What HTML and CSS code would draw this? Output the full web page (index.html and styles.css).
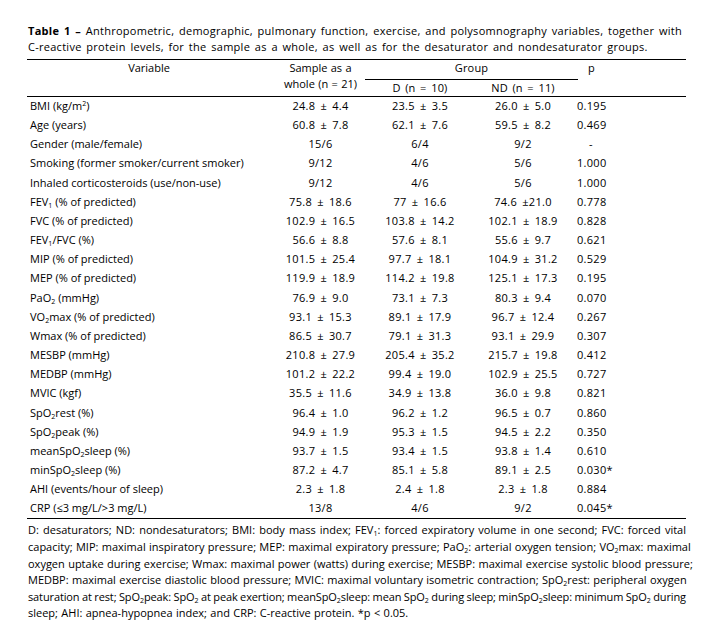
FILE: index.html
```html
<!DOCTYPE html>
<html lang="en">
<head>
<meta charset="utf-8">
<title>Table 1</title>
<link rel="stylesheet" href="styles.css">
</head>
<body>
<div class="page">
  <p class="caption"><b>Table 1 –</b> Anthropometric, demographic, pulmonary function, exercise, and polysomnography variables, together with<br>C-reactive protein levels, for the sample as a whole, as well as for the desaturator and nondesaturator groups.</p>
  <table class="data">
    <colgroup>
      <col class="c-var"><col class="c-all"><col class="c-d"><col class="c-nd"><col class="c-p">
    </colgroup>
    <thead>
      <tr class="h1">
        <th rowspan="2" class="th-var">Variable</th>
        <th rowspan="2" class="th-all">Sample as a<br>whole (n = 21)</th>
        <th colspan="2" class="th-group"><div class="group-label">Group</div></th>
        <th rowspan="2" class="th-p">p</th>
      </tr>
      <tr class="h2">
        <th>D (n = 10)</th>
        <th>ND (n = 11)</th>
      </tr>
    </thead>
    <tbody>
      <tr><td>BMI (kg/m<sup>2</sup>)</td><td>24.8 ± 4.4</td><td>23.5 ± 3.5</td><td>26.0 ± 5.0</td><td>0.195</td></tr>
      <tr><td>Age (years)</td><td>60.8 ± 7.8</td><td>62.1 ± 7.6</td><td>59.5 ± 8.2</td><td>0.469</td></tr>
      <tr><td>Gender (male/female)</td><td>15/6</td><td>6/4</td><td>9/2</td><td class="dash">-</td></tr>
      <tr><td>Smoking (former smoker/current smoker)</td><td>9/12</td><td>4/6</td><td>5/6</td><td>1.000</td></tr>
      <tr><td>Inhaled corticosteroids (use/non-use)</td><td>9/12</td><td>4/6</td><td>5/6</td><td>1.000</td></tr>
      <tr><td>FEV<sub>1</sub> (% of predicted)</td><td>75.8 ± 18.6</td><td>77 ± 16.6</td><td>74.6 ±21.0</td><td>0.778</td></tr>
      <tr><td>FVC (% of predicted)</td><td>102.9 ± 16.5</td><td>103.8 ± 14.2</td><td>102.1 ± 18.9</td><td>0.828</td></tr>
      <tr><td>FEV<sub>1</sub>/FVC (%)</td><td>56.6 ± 8.8</td><td>57.6 ± 8.1</td><td>55.6 ± 9.7</td><td>0.621</td></tr>
      <tr><td>MIP (% of predicted)</td><td>101.5 ± 25.4</td><td>97.7 ± 18.1</td><td>104.9 ± 31.2</td><td>0.529</td></tr>
      <tr><td>MEP (% of predicted)</td><td>119.9 ± 18.9</td><td>114.2 ± 19.8</td><td>125.1 ± 17.3</td><td>0.195</td></tr>
      <tr><td>PaO<sub>2</sub> (mmHg)</td><td>76.9 ± 9.0</td><td>73.1 ± 7.3</td><td>80.3 ± 9.4</td><td>0.070</td></tr>
      <tr><td>VO<sub>2</sub>max (% of predicted)</td><td>93.1 ± 15.3</td><td>89.1 ± 17.9</td><td>96.7 ± 12.4</td><td>0.267</td></tr>
      <tr><td>Wmax (% of predicted)</td><td>86.5 ± 30.7</td><td>79.1 ± 31.3</td><td>93.1 ± 29.9</td><td>0.307</td></tr>
      <tr><td>MESBP (mmHg)</td><td>210.8 ± 27.9</td><td>205.4 ± 35.2</td><td>215.7 ± 19.8</td><td>0.412</td></tr>
      <tr><td>MEDBP (mmHg)</td><td>101.2 ± 22.2</td><td>99.4 ± 19.0</td><td>102.9 ± 25.5</td><td>0.727</td></tr>
      <tr><td>MVIC (kgf)</td><td>35.5 ± 11.6</td><td>34.9 ± 13.8</td><td>36.0 ± 9.8</td><td>0.821</td></tr>
      <tr><td>SpO<sub>2</sub>rest (%)</td><td>96.4 ± 1.0</td><td>96.2 ± 1.2</td><td>96.5 ± 0.7</td><td>0.860</td></tr>
      <tr><td>SpO<sub>2</sub>peak (%)</td><td>94.9 ± 1.9</td><td>95.3 ± 1.5</td><td>94.5 ± 2.2</td><td>0.350</td></tr>
      <tr><td>meanSpO<sub>2</sub>sleep (%)</td><td>93.7 ± 1.5</td><td>93.4 ± 1.5</td><td>93.8 ± 1.4</td><td>0.610</td></tr>
      <tr><td>minSpO<sub>2</sub>sleep (%)</td><td>87.2 ± 4.7</td><td>85.1 ± 5.8</td><td>89.1 ± 2.5</td><td>0.030*</td></tr>
      <tr><td>AHI (events/hour of sleep)</td><td>2.3 ± 1.8</td><td>2.4 ± 1.8</td><td>2.3 ± 1.8</td><td>0.884</td></tr>
      <tr><td>CRP (≤3 mg/L/&gt;3 mg/L)</td><td>13/8</td><td>4/6</td><td>9/2</td><td>0.045*</td></tr>
    </tbody>
  </table>
  <div class="notes">
    <span class="line">D: desaturators; ND: nondesaturators; BMI: body mass index; FEV<sub>1</sub>: forced expiratory volume in one second; FVC: forced vital</span>
    <span class="line">capacity; MIP: maximal inspiratory pressure; MEP: maximal expiratory pressure; PaO<sub>2</sub>: arterial oxygen tension; VO<sub>2</sub>max: maximal</span>
    <span class="line">oxygen uptake during exercise; Wmax: maximal power (watts) during exercise; MESBP: maximal exercise systolic blood pressure;</span>
    <span class="line">MEDBP: maximal exercise diastolic blood pressure; MVIC: maximal voluntary isometric contraction; SpO<sub>2</sub>rest: peripheral oxygen</span>
    <span class="line tight">saturation at rest; SpO<sub>2</sub>peak: SpO<sub>2</sub> at peak exertion; meanSpO<sub>2</sub>sleep: mean SpO<sub>2</sub> during sleep; minSpO<sub>2</sub>sleep: minimum SpO<sub>2</sub> during</span>
    <span class="line last">sleep; AHI: apnea-hypopnea index; and CRP: C-reactive protein. *p &lt; 0.05.</span>
  </div>
</div>
</body>
</html>
```
FILE: styles.css
```css
html, body {
  margin: 0;
  padding: 0;
  background: #ffffff;
}

body {
  font-family: "Open Sans", "Noto Sans", sans-serif;
  font-size: 11px;
  color: #000000;
}

.page {
  width: 659px;
  padding: 23px 0 0 27px;
}

.caption {
  margin: 0 0 4px 1px;
  line-height: 16px;
  letter-spacing: 0.27px;
  word-spacing: 1.6px;
  white-space: nowrap;
}

.caption b {
  font-weight: 700;
}

sub, sup {
  font-size: 7px;
  line-height: 0;
  position: relative;
  vertical-align: baseline;
  letter-spacing: 0;
}

sub {
  top: 2px;
}

sup {
  top: -4px;
}

.data {
  width: 659px;
  border-collapse: collapse;
  table-layout: fixed;
  border-top: 1px solid #000;
  border-bottom: 1px solid #000;
}

.c-var { width: 244px; }
.c-all { width: 99px; }
.c-d { width: 100px; }
.c-nd { width: 106px; }
.c-p { width: 110px; }

.data th {
  font-weight: 400;
  padding: 0;
  text-align: center;
  vertical-align: top;
  letter-spacing: 0.2px;
  word-spacing: 1.5px;
  white-space: nowrap;
}

.data thead tr.h1 th {
  height: 20px;
  line-height: 16px;
}

.data thead tr.h2 th {
  height: 16px;
  line-height: 16px;
}

.data thead {
  border-bottom: 1px solid #000;
}

.data th.th-var {
  letter-spacing: 0;
  word-spacing: 0;
}

.data th.th-all {
  line-height: 17px;
  letter-spacing: 0;
  word-spacing: 0.5px;
}

.group-label {
  margin: 0 -2px 0 -5px;
  border-bottom: 1px solid #000;
  height: 19px;
}

.data th.th-p {
  text-align: left;
  padding-left: 12px;
}

.data td {
  padding: 0 0 2px;
  height: 17.15px;
  line-height: 17.15px;
  text-align: center;
  white-space: nowrap;
  letter-spacing: 0.3px;
  word-spacing: 2px;
}

.data td:first-child {
  text-align: left;
  padding-left: 3px;
  letter-spacing: 0;
  word-spacing: 0;
}

.data td:last-child {
  text-align: left;
  padding-left: 1px;
}

.data td.dash {
  padding-left: 13px;
}

.notes {
  margin-top: 3px;
  line-height: 16.6px;
  margin-left: 1px;
  font-size: 11px;
  word-spacing: 0.5px;
}

.notes .line {
  display: block;
  white-space: nowrap;
  text-align: justify;
  text-align-last: justify;
}

.notes .line.tight {
  letter-spacing: -0.12px;
  word-spacing: -1px;
}

.notes .line.last {
  text-align-last: left;
}
```
